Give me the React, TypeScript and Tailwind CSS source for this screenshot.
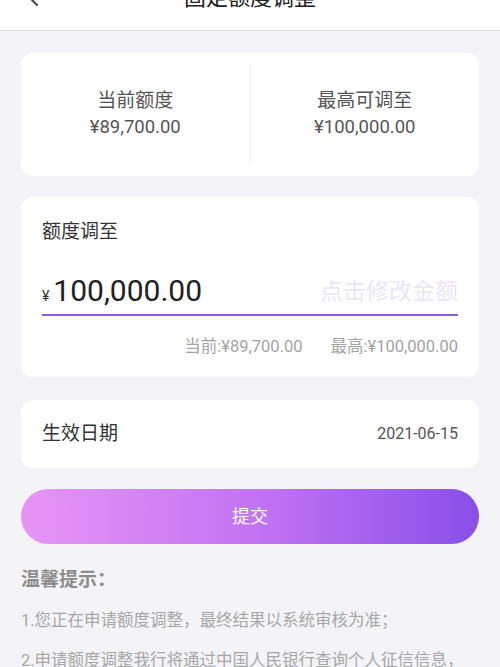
const font = { fontFamily: "Roboto, 'Noto Sans CJK SC', sans-serif" };

export default function App() {
  return (
    <div className="min-h-[667px] overflow-hidden bg-[#f4f4f8]" style={font}>
      {/* header, scrolled partly off-screen */}
      <div className="relative -mt-[36px] flex h-[67px] items-center justify-center border-b border-[#dcdcdc] bg-white">
        <svg
          className="absolute left-[26px] top-[24px] h-[18px] w-[14px]"
          viewBox="0 0 14 18"
          fill="none"
          stroke="#444"
          strokeWidth={2}
          strokeLinecap="round"
          strokeLinejoin="round"
        >
          <path d="M11 1 L3 9 L11 17" />
        </svg>
        <span className="text-[22px] text-[#222]">固定额度调整</span>
      </div>

      <div className="flex flex-col px-[21px]">
        {/* current / max */}
        <div className="mt-[22px] flex h-[123px] items-center rounded-[12px] bg-white">
          <div className="flex flex-1 flex-col items-center">
            <span className="text-[19px] leading-[26px] text-[#555]">当前额度</span>
            <span className="text-[18.5px] leading-[27px] text-[#555]">¥89,700.00</span>
          </div>
          <div className="h-[96px] w-px bg-[#eeeeee]" />
          <div className="flex flex-1 flex-col items-center">
            <span className="text-[19px] leading-[26px] text-[#555]">最高可调至</span>
            <span className="text-[18.5px] leading-[27px] text-[#555]">¥100,000.00</span>
          </div>
        </div>

        {/* adjust to */}
        <div className="mt-[21px] flex flex-col rounded-[12px] bg-white px-[21px] pt-[22px] pb-[19px]">
          <span className="text-[19px] leading-[26px] text-[#333]">额度调至</span>
          <div className="mt-[28px] flex items-end justify-between border-b-2 border-[#8e5bd6] pb-[5px]">
            <div className="flex items-baseline">
              <span className="mr-[4px] text-[14px] text-[#333]">¥</span>
              <span className="text-[30px] leading-[36px] text-[#222]">100,000.00</span>
            </div>
            <span className="mb-[2px] text-[23px] leading-[30px] text-[#ede5f3]">点击修改金额</span>
          </div>
          <div className="mt-[20px] flex justify-end gap-[28px] text-[16.5px] leading-[22px] text-[#a3a3a3]">
            <span>当前:¥89,700.00</span>
            <span>最高:¥100,000.00</span>
          </div>
        </div>

        {/* effective date */}
        <div className="mt-[23px] flex h-[68px] items-center justify-between rounded-[12px] bg-white px-[21px]">
          <span className="text-[19px] text-[#333]">生效日期</span>
          <span className="text-[16px] text-[#555]">2021-06-15</span>
        </div>

        <button className="mt-[21px] flex h-[55px] items-center justify-center rounded-full bg-gradient-to-r from-[#e794f6] via-[#c474f2] to-[#8a4ee8] text-[18px] text-white">
          提交
        </button>

        <div className="mt-[23px] text-[19px] font-bold leading-[26px] text-[#8c8c8c]">温馨提示：</div>
        <p className="mt-[15px] text-[16.5px] leading-[26px] text-[#a6a6a6]">
          1.您正在申请额度调整，最终结果以系统审核为准；
        </p>
        <p className="mt-[14px] whitespace-nowrap text-[16.5px] leading-[26px] text-[#a6a6a6]">
          2.申请额度调整我行将通过中国人民银行查询个人征信信息，
        </p>
      </div>
    </div>
  );
}
